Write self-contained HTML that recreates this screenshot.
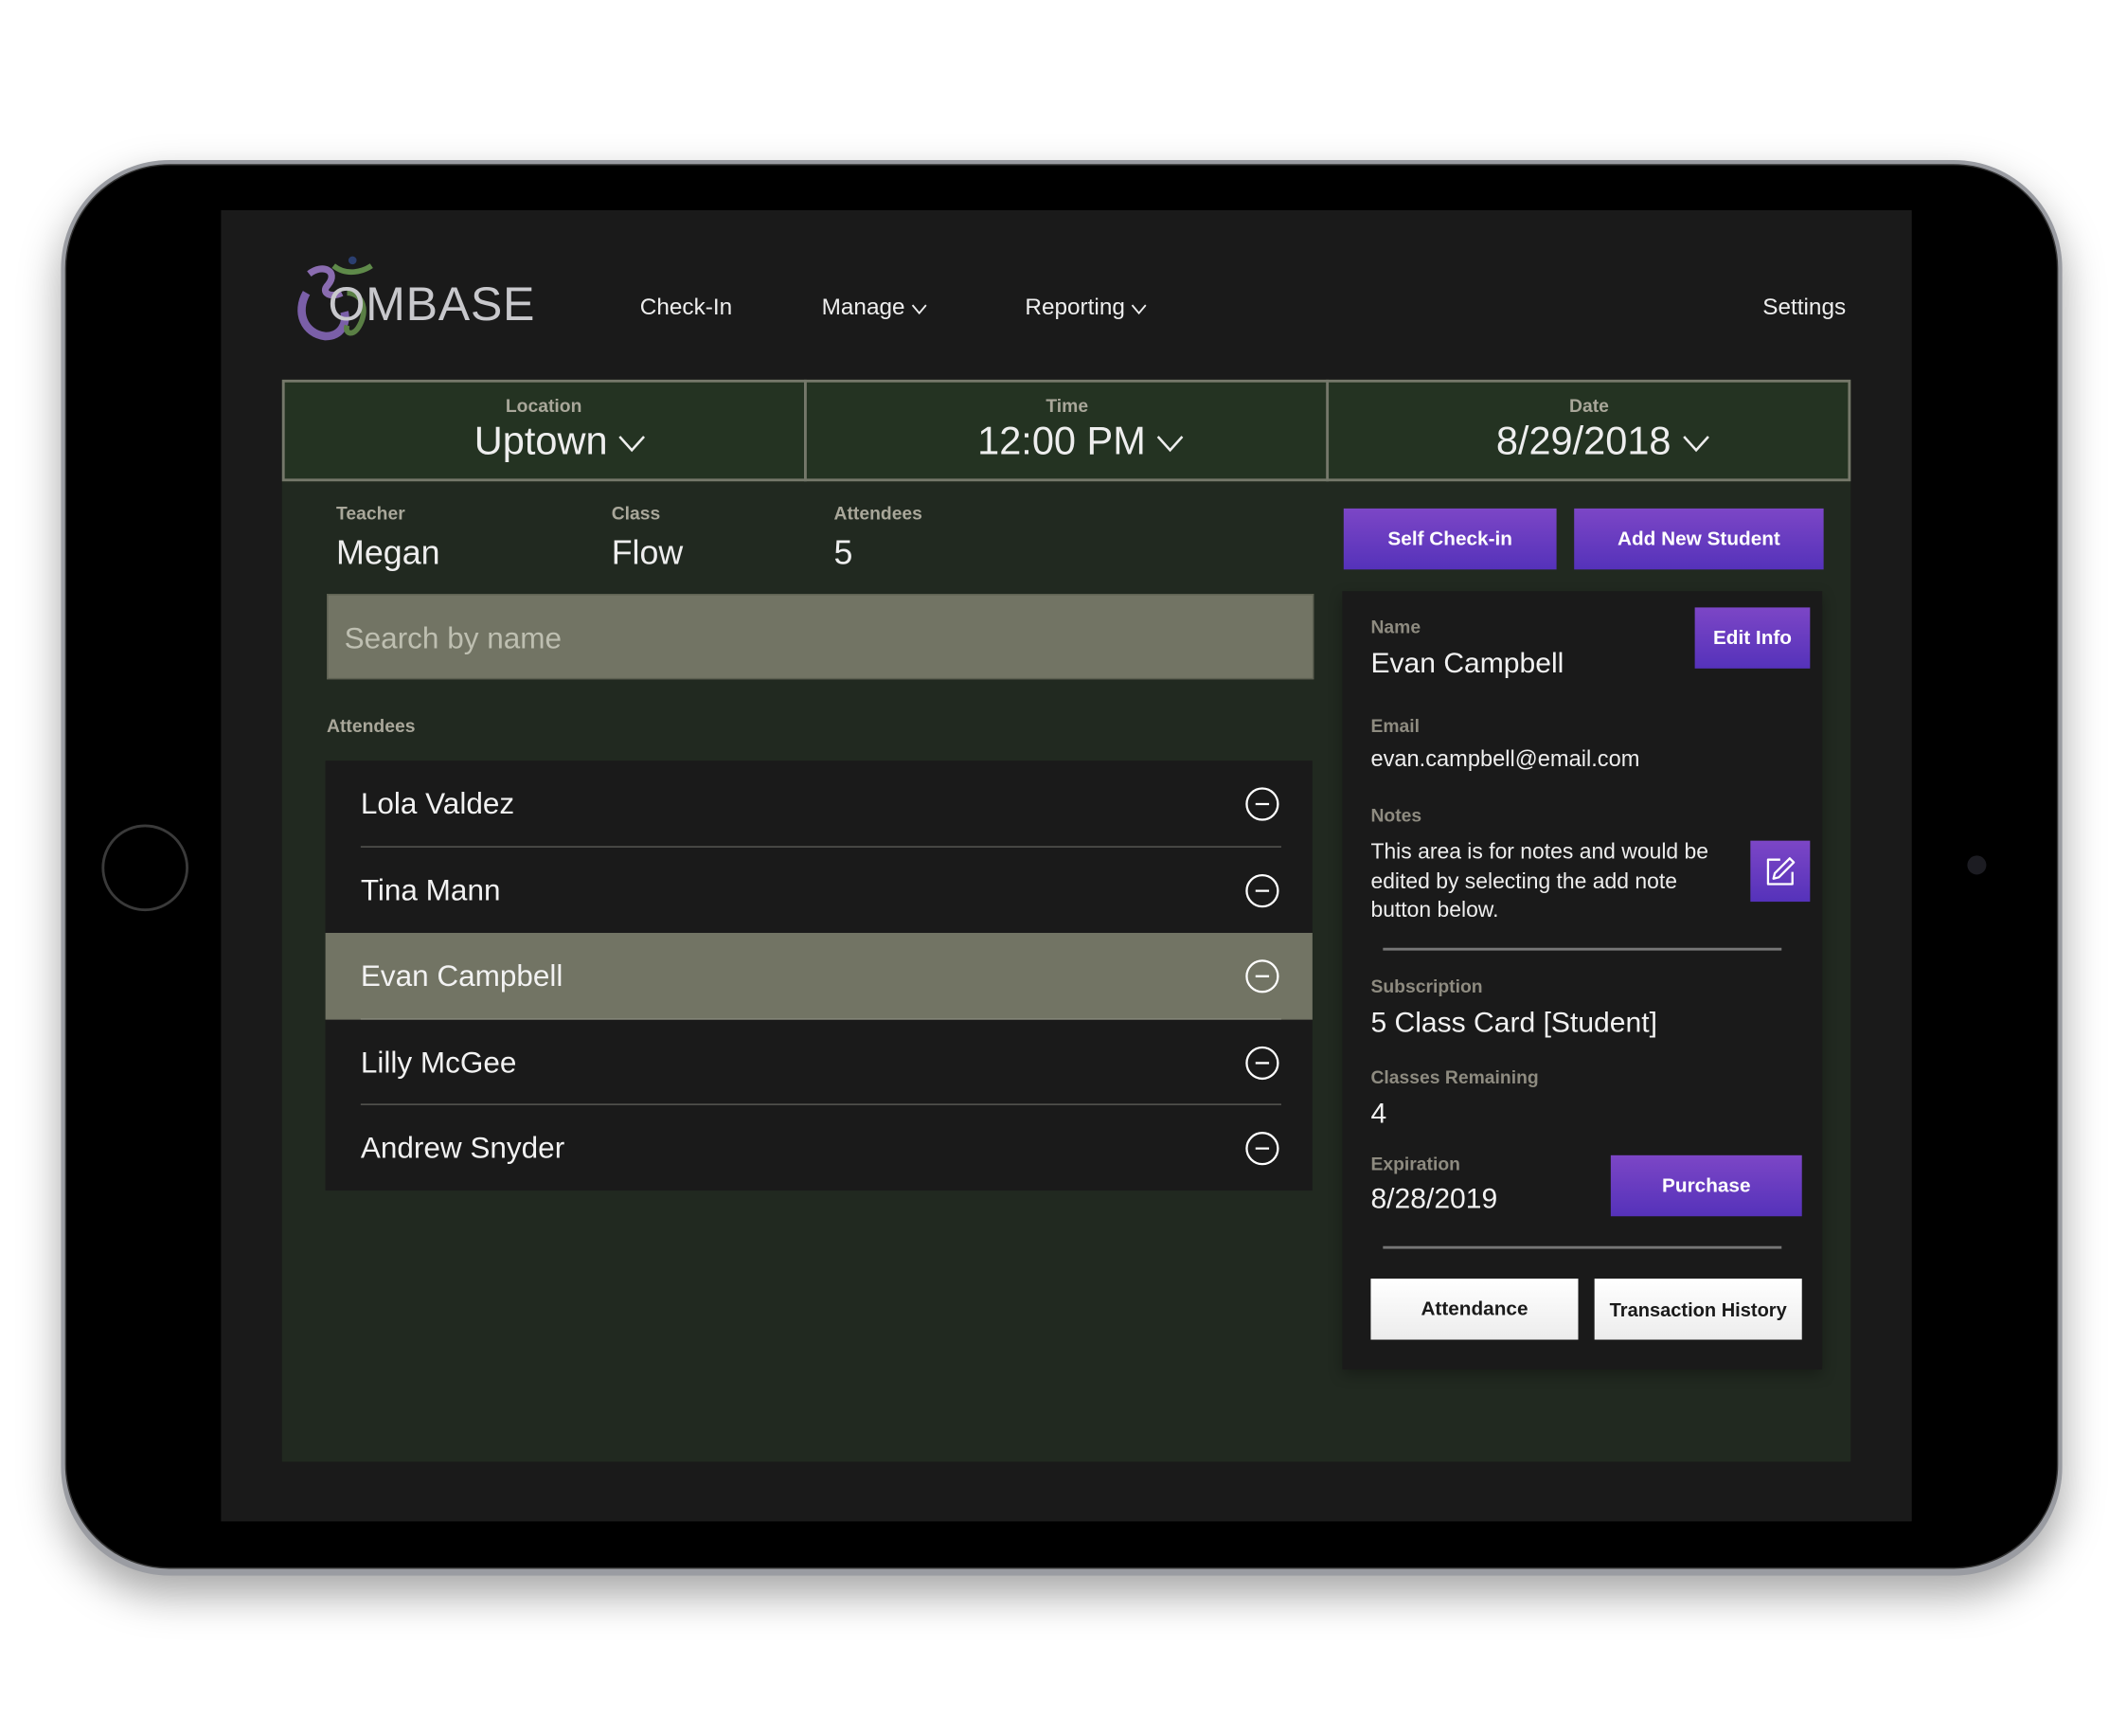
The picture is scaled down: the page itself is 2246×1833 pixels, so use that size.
<!DOCTYPE html>
<html><head><meta charset="utf-8"><style>
*{margin:0;padding:0;box-sizing:border-box}
html,body{width:2246px;height:1830px;overflow:hidden;background:#fff}
#w{position:absolute;left:0;top:0;width:1570px;height:1280px;transform:scale(1.4317);transform-origin:0 0;font-family:"Liberation Sans",sans-serif}
.a{position:absolute}
.t{position:absolute;white-space:nowrap;line-height:1}
.lb{font-size:13.5px;color:#a9a79a;font-weight:bold}
.lbs{font-size:13.5px;color:#8e8b80;font-weight:bold}
.btn{position:absolute;background:linear-gradient(#7c46c6,#5532ba);color:#fff;font-weight:bold;font-size:14.5px;display:flex;align-items:center;justify-content:center}
.wb{position:absolute;background:linear-gradient(#fff,#ececec);color:#1a1a1a;font-weight:bold;font-size:14.5px;display:flex;align-items:center;justify-content:center}
.row{position:absolute;left:0;width:728px;height:63.5px}
.row .n{position:absolute;left:26px;top:21px;font-size:22px;color:#f2f2f2;line-height:1}
.row svg{position:absolute;left:678px;top:19px}
.sep{position:absolute;left:26px;width:679px;height:1px;background:#5a5a55}
.cv{display:inline-block;vertical-align:middle}
</style></head><body><div id="w">
<div class="a" style="left:45px;top:118px;width:1476px;height:1044px;border-radius:80px;background:#9a9ca2;box-shadow:0 14px 30px rgba(0,0,0,.35)"></div>
<div class="a" style="left:48px;top:121px;width:1470px;height:1036px;border-radius:77px;background:#000;border:1px solid #333"></div>
<div class="a" style="left:75px;top:608px;width:64px;height:64px;border-radius:50%;border:2px solid #3a3a3a"></div>
<div class="a" style="left:1451px;top:631px;width:14px;height:14px;border-radius:50%;background:#1c1c22"></div>
<div class="a" style="left:163px;top:155px;width:1247px;height:967px;background:#1a1a1a"></div>
<svg class="a" style="left:216px;top:186px" width="70" height="70" viewBox="0 0 70 70">
<path d="M12 16 C22 8 34 14 26 24 C20 30 28 34 36 30" fill="none" stroke="#8a6cb0" stroke-width="5"/>
<path d="M10 30 C2 44 8 60 24 62 C36 62 40 52 38 44" fill="none" stroke="#7a5fa8" stroke-width="6"/>
<path d="M30 10 C40 18 52 14 58 10" fill="none" stroke="#5f8a4a" stroke-width="4"/>
<path d="M40 30 C52 30 56 44 48 56 C44 62 38 60 40 54" fill="none" stroke="#5a7f45" stroke-width="4"/>
<circle cx="44" cy="6" r="3" fill="#2b3f70"/>
</svg>
<div class="t" style="left:242px;top:207px;font-size:35px;color:#c8c8cc;letter-spacing:0.5px">OMBASE</div>
<div class="t" style="left:472px;top:218px;font-size:17px;color:#eee">Check-In</div>
<div class="t" style="left:606px;top:218px;font-size:17px;color:#eee">Manage <svg class="cv" width="12" height="8" viewBox="0 0 12 8"><path d="M1 1 L6 7 L11 1" fill="none" stroke="#eee" stroke-width="1.3"/></svg></div>
<div class="t" style="left:756px;top:218px;font-size:17px;color:#eee">Reporting <svg class="cv" width="12" height="8" viewBox="0 0 12 8"><path d="M1 1 L6 7 L11 1" fill="none" stroke="#eee" stroke-width="1.3"/></svg></div>
<div class="t" style="left:1300px;top:218px;font-size:17px;color:#eee">Settings</div>
<div class="a" style="left:208px;top:280px;width:1157px;height:798px;background:#212920"></div>
<div class="a" style="left:208px;top:280px;width:1157px;height:75px;background:#243322;border:2px solid #75786a"></div>
<div class="a" style="left:593px;top:280px;width:2px;height:75px;background:#75786a"></div>
<div class="a" style="left:978px;top:280px;width:2px;height:75px;background:#75786a"></div>
<div class="t lb" style="left:208px;width:386px;text-align:center;top:293px">Location</div>
<div class="t" style="left:220px;width:386px;text-align:center;top:312px;font-size:29px;color:#eee">Uptown <svg class="cv" width="20" height="13" viewBox="0 0 20 13"><path d="M1 1 L10 11 L19 1" fill="none" stroke="#eee" stroke-width="1.8"/></svg></div>
<div class="t lb" style="left:594px;width:386px;text-align:center;top:293px">Time</div>
<div class="t" style="left:604px;width:386px;text-align:center;top:312px;font-size:29px;color:#eee">12:00 PM <svg class="cv" width="20" height="13" viewBox="0 0 20 13"><path d="M1 1 L10 11 L19 1" fill="none" stroke="#eee" stroke-width="1.8"/></svg></div>
<div class="t lb" style="left:979px;width:386px;text-align:center;top:293px">Date</div>
<div class="t" style="left:989px;width:386px;text-align:center;top:312px;font-size:29px;color:#eee">8/29/2018 <svg class="cv" width="20" height="13" viewBox="0 0 20 13"><path d="M1 1 L10 11 L19 1" fill="none" stroke="#eee" stroke-width="1.8"/></svg></div>
<div class="t lb" style="left:248px;top:372px">Teacher</div>
<div class="t lb" style="left:451px;top:372px">Class</div>
<div class="t lb" style="left:615px;top:372px">Attendees</div>
<div class="t" style="left:248px;top:396px;font-size:25px;color:#eee">Megan</div>
<div class="t" style="left:451px;top:396px;font-size:25px;color:#eee">Flow</div>
<div class="t" style="left:615px;top:396px;font-size:25px;color:#eee">5</div>
<div class="btn" style="left:991px;top:375px;width:157px;height:45px">Self Check-in</div>
<div class="btn" style="left:1161px;top:375px;width:184px;height:45px">Add New Student</div>
<div class="a" style="left:241px;top:438px;width:728px;height:63px;background:#727464;border:1px solid #5e6152"></div>
<div class="t" style="left:254px;top:460px;font-size:22px;color:#bebfb1">Search by name</div>
<div class="t lb" style="left:241px;top:529px">Attendees</div>
<div class="a" style="left:240px;top:561px;width:728px;height:317px;background:#1a1a1a">
 <div class="row" style="top:0"><div class="n">Lola Valdez</div><svg width="26" height="26"><circle cx="13" cy="13" r="11.5" fill="none" stroke="#fff" stroke-width="1.6"/><line x1="8" y1="13" x2="18" y2="13" stroke="#fff" stroke-width="1.6"/></svg></div>
 <div class="sep" style="top:63px"></div>
 <div class="row" style="top:63.5px"><div class="n">Tina Mann</div><svg width="26" height="26"><circle cx="13" cy="13" r="11.5" fill="none" stroke="#fff" stroke-width="1.6"/><line x1="8" y1="13" x2="18" y2="13" stroke="#fff" stroke-width="1.6"/></svg></div>
 <div class="row" style="top:127px;background:#727464"><div class="n">Evan Campbell</div><svg width="26" height="26"><circle cx="13" cy="13" r="11.5" fill="none" stroke="#fff" stroke-width="1.6"/><line x1="8" y1="13" x2="18" y2="13" stroke="#fff" stroke-width="1.6"/></svg></div>
 <div class="sep" style="top:190px;background:#85877a"></div>
 <div class="row" style="top:190.5px"><div class="n">Lilly McGee</div><svg width="26" height="26"><circle cx="13" cy="13" r="11.5" fill="none" stroke="#fff" stroke-width="1.6"/><line x1="8" y1="13" x2="18" y2="13" stroke="#fff" stroke-width="1.6"/></svg></div>
 <div class="sep" style="top:253px"></div>
 <div class="row" style="top:254px"><div class="n">Andrew Snyder</div><svg width="26" height="26"><circle cx="13" cy="13" r="11.5" fill="none" stroke="#fff" stroke-width="1.6"/><line x1="8" y1="13" x2="18" y2="13" stroke="#fff" stroke-width="1.6"/></svg></div>
</div>
<div class="a" style="left:990px;top:436px;width:354px;height:574px;background:#1a1a1a;box-shadow:0 4px 10px rgba(0,0,0,.3)"></div>
<div class="t lbs" style="left:1011px;top:456px">Name</div>
<div class="t" style="left:1011px;top:479px;font-size:21px;color:#f2f2f2">Evan Campbell</div>
<div class="btn" style="left:1250px;top:448px;width:85px;height:45px">Edit Info</div>
<div class="t lbs" style="left:1011px;top:529px">Email</div>
<div class="t" style="left:1011px;top:552px;font-size:16.5px;color:#eee">evan.campbell@email.com</div>
<div class="t lbs" style="left:1011px;top:595px">Notes</div>
<div class="a" style="left:1011px;top:618px;width:268px;font-size:16px;line-height:21.5px;color:#eee">This area is for notes and would be edited by selecting the add note button below.</div>
<div class="btn" style="left:1291px;top:620px;width:44px;height:45px"><svg width="26" height="26" viewBox="0 0 26 26"><path d="M13 4 H4 V22 H22 V13" fill="none" stroke="#fff" stroke-width="1.6" stroke-linejoin="round"/><path d="M20 3 L23 6 L12 17 L8 18 L9 14 Z" fill="none" stroke="#fff" stroke-width="1.6" stroke-linejoin="round"/></svg></div>
<div class="a" style="left:1020px;top:699px;width:294px;height:2px;background:#767676"></div>
<div class="t lbs" style="left:1011px;top:721px">Subscription</div>
<div class="t" style="left:1011px;top:744px;font-size:21px;color:#f2f2f2">5 Class Card [Student]</div>
<div class="t lbs" style="left:1011px;top:788px">Classes Remaining</div>
<div class="t" style="left:1011px;top:811px;font-size:21px;color:#f2f2f2">4</div>
<div class="t lbs" style="left:1011px;top:852px">Expiration</div>
<div class="t" style="left:1011px;top:874px;font-size:21px;color:#f2f2f2">8/28/2019</div>
<div class="btn" style="left:1188px;top:852px;width:141px;height:45px">Purchase</div>
<div class="a" style="left:1020px;top:919px;width:294px;height:2px;background:#767676"></div>
<div class="wb" style="left:1011px;top:943px;width:153px;height:45px">Attendance</div>
<div class="wb" style="left:1176px;top:943px;width:153px;height:45px;font-size:14px">Transaction History</div>
</div></body></html>
